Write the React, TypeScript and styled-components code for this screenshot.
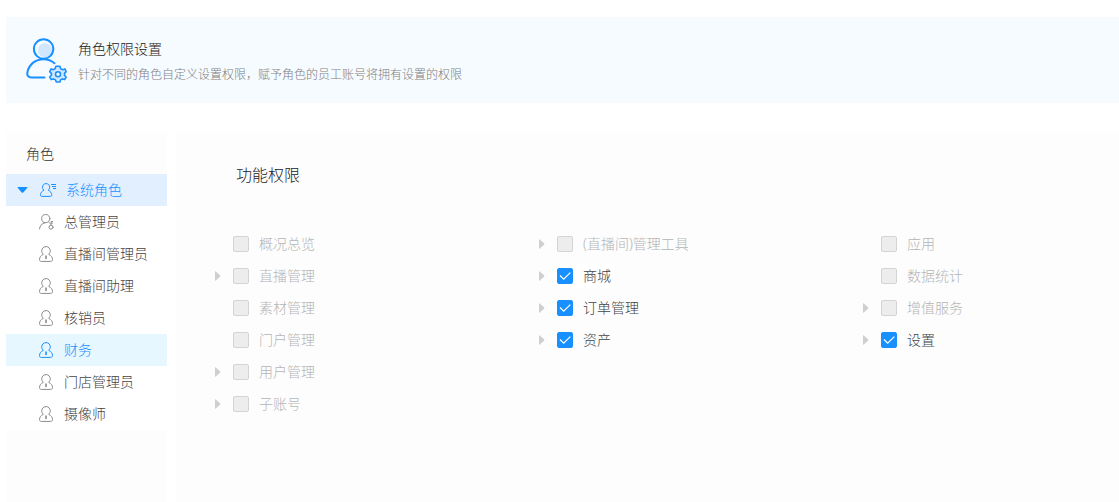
import React, { useState } from "react";
import styled, { createGlobalStyle, css } from "styled-components";

const GlobalStyle = createGlobalStyle`
  *, *::before, *::after { box-sizing: border-box; }
  body {
    margin: 0;
    background: #fff;
    color: #333;
    font-family: "Noto Sans", "Noto Sans CJK SC", sans-serif;
    font-size: 14px;
    font-weight: 300;
    line-height: 22px;
  }
  h1, h2, p, ul { margin: 0; padding: 0; font-weight: inherit; }
  ul { list-style: none; }
  button { border: 0; padding: 0; background: none; font: inherit; color: inherit; cursor: pointer; }
`;

const Page = styled.div`
  display: flex;
  flex-direction: column;
  gap: 29px;
  min-height: 100vh;
  padding: 17px 0 0 6px;
`;

const Banner = styled.header`
  display: flex;
  align-items: center;
  gap: 10px;
  height: 86px;
  padding: 0 20px;
  background: #f5fbff;
`;

const BannerText = styled.div`
  display: flex;
  flex-direction: column;
  gap: 4px;
  padding-top: 4px;
`;

const BannerTitle = styled.h1`
  font-size: 14px;
  color: #222;
`;

const BannerNote = styled.p`
  font-size: 12px;
  color: #808080;
`;

const Content = styled.div`
  display: flex;
  flex: 1;
  gap: 9px;
`;

const Sidebar = styled.nav`
  flex: 0 0 161px;
  background: #fdfdfd;
`;

const SidebarTitle = styled.h2`
  padding: 2px 20px 0;
  font-size: 14px;
  line-height: 40px;
`;

const RoleRow = styled.button<{ $selected?: boolean }>`
  display: flex;
  align-items: center;
  gap: 9px;
  width: 100%;
  height: 32px;
  padding-left: 33px;
  color: #444;
  background: #fff;
  ${(p) => p.$selected && css`color: #1890ff; background: #e6f7ff;`}
  svg { color: ${(p) => (p.$selected ? "#1890ff" : "#8c8c8c")}; }
`;

const GroupRow = styled(RoleRow)`
  padding-left: 11px;
  color: #1890ff;
  background: #e1efff;
  svg { color: #1890ff; }
  svg + svg { margin-left: 3px; }
`;

const Main = styled.main`
  flex: 1;
  min-width: 0;
  padding: 32px 0 32px 37px;
  background: #fdfdfd;
`;

const MainTitle = styled.h2`
  padding-left: 23px;
  font-size: 16px;
  line-height: 22px;
  color: #222;
`;

const Columns = styled.div`
  display: grid;
  grid-template-columns: 54fr 54fr 43fr;
  margin-top: 42px;
`;

const PermissionRow = styled.li`
  display: flex;
  align-items: center;
  height: 32px;
`;

const Expander = styled.button`
  display: flex;
  align-items: center;
  width: 17px;
  height: 24px;
  color: #cfcfcf;
`;

const Spacer = styled.span`
  width: 17px;
`;

const CheckLabel = styled.label<{ $disabled: boolean; $highlight?: boolean }>`
  display: flex;
  align-items: center;
  gap: 10px;
  padding: 1px 3px;
  color: ${(p) => (p.$disabled ? "#b5b5b5" : "#444")};
  background: ${(p) => (p.$highlight ? "#fff" : "transparent")};
`;

const CheckFrame = styled.span`
  display: grid;
  & > * { grid-area: 1 / 1; }
  svg { pointer-events: none; z-index: 1; }
`;

const Checkbox = styled.input`
  appearance: none;
  width: 16px;
  height: 16px;
  margin: 0;
  border: 1px solid #d4d4d4;
  border-radius: 2px;
  background: #fff;
  &:disabled { background: #ededed; }
  &:checked { border-color: #1890ff; background: #1890ff; }
  & + svg { visibility: hidden; }
  &:checked + svg { visibility: visible; }
`;

const RoleSettingsIcon = () => (
  <svg width="42" height="46" viewBox="0 0 42 46" fill="none" stroke="#1890ff" strokeWidth="2" strokeLinecap="round" aria-hidden="true">
    <circle cx="19" cy="13.2" r="7" fill="#d1e6ff" stroke="none" />
    <circle cx="17.6" cy="12" r="9.7" />
    <path d="M28.5 26.2C25 23.2 21.5 22.2 17.5 22.2C9.5 22.2 3.4 27.2 1.5 34.8C.8 38 1.8 40.4 5 40.4H18.5" />
    <path
      d="M29.9 29.2H33.9L34.6 31.6L36.5 32.7L38.9 31.9L40.1 34.6L38.5 36.4V38.2L40.1 40L38.7 42.6L36.4 41.9L34.6 42.9L33.9 45H30.3L29.4 42.9L27.5 41.9L25.2 42.6L23.7 40L25.4 38.2V36.4L23.7 34.6L25.2 31.9L27.5 32.7L29.2 31.6Z"
      fill="#d1e6ff"
      strokeWidth="1.6"
      strokeLinejoin="round"
    />
    <circle cx="32" cy="37.2" r="2.5" fill="#f5fbff" strokeWidth="1.6" />
  </svg>
);

const CaretDown = () => (
  <svg width="11" height="6" viewBox="0 0 11 6" aria-hidden="true">
    <path d="M1.2 0H9.8Q11 0 10.2 1L6.3 5.4Q5.5 6 4.7 5.4L.8 1Q0 0 1.2 0Z" fill="currentColor" />
  </svg>
);

const CaretRight = () => (
  <svg width="8" height="10" viewBox="0 0 8 10" aria-hidden="true">
    <path d="M2 .6Q2 -.2 2.8 .4L7 4.2Q7.7 5 7 5.8L2.8 9.6Q2 10.2 2 9.4Z" fill="currentColor" />
  </svg>
);

const bodyPath =
  "M4.4 8.3C3.3 7.4 2.7 6.2 2.7 4.9C2.7 2.5 4.5 .6 7 .6S11.3 2.5 11.3 4.9C11.3 6.2 10.7 7.4 9.6 8.3C12.1 9.5 13.5 11.4 13.5 13.6C13.5 14.8 12.9 15.4 11.7 15.4H2.3C1.1 15.4 .5 14.8 .5 13.6C.5 11.4 1.9 9.5 4.4 8.3Z";

const RoleIcon = () => (
  <svg width="16" height="16" viewBox="0 0 16 16" fill="none" stroke="currentColor" aria-hidden="true">
    <path d={bodyPath} />
    <path d="M7 9.5V13" strokeWidth="1.6" />
  </svg>
);

const AdminIcon = () => (
  <svg width="16" height="16" viewBox="0 0 16 16" fill="none" stroke="currentColor" strokeLinecap="round" aria-hidden="true">
    <circle cx="6.8" cy="4.6" r="4.1" />
    <path d="M.5 15C.9 11.5 2.9 9.3 6 8.8M9.6 8L10.6 9" />
    <path d="M12 11V7.6H13.6M12 9.2H13.4" />
    <circle cx="12" cy="13.2" r="2" />
  </svg>
);

const GroupIcon = () => (
  <svg width="17" height="14" viewBox="0 0 17 14" fill="none" stroke="currentColor" aria-hidden="true">
    <path d="M4 7.2C2.9 6.4 2.5 5.4 2.5 4.2C2.5 2.1 4 .6 6.1 .6S9.7 2.1 9.7 4.2C9.7 5.4 9.3 6.4 8.2 7.2C10.5 8.3 11.7 9.9 11.7 11.8C11.7 12.9 11.2 13.4 10.1 13.4H2.1C1 13.4 .5 12.9 .5 11.8C.5 9.9 1.7 8.3 4 7.2Z" />
    <path d="M11 1.5H16M12 3.5H16M13 5.5H16" />
  </svg>
);

const CheckMark = () => (
  <svg width="16" height="16" viewBox="0 0 16 16" fill="none" stroke="#fff" strokeWidth="1.2" aria-hidden="true">
    <path d="M3 7.5L6.7 11.2L13.3 4.6" />
  </svg>
);

const roles = ["总管理员", "直播间管理员", "直播间助理", "核销员", "财务", "门店管理员", "摄像师"];

type Permission = { name: string; expandable?: boolean; granted?: boolean; highlight?: boolean };

const permissions: Permission[][] = [
  [
    { name: "概况总览" },
    { name: "直播管理", expandable: true },
    { name: "素材管理" },
    { name: "门户管理" },
    { name: "用户管理", expandable: true },
    { name: "子账号", expandable: true },
  ],
  [
    { name: "(直播间)管理工具", expandable: true },
    { name: "商城", expandable: true, granted: true, highlight: true },
    { name: "订单管理", expandable: true, granted: true },
    { name: "资产", expandable: true, granted: true },
  ],
  [
    { name: "应用" },
    { name: "数据统计" },
    { name: "增值服务", expandable: true },
    { name: "设置", expandable: true, granted: true },
  ],
];

function PermissionItem({ name, expandable, granted = false, highlight }: Permission) {
  return (
    <PermissionRow>
      {expandable ? (
        <Expander type="button" aria-label={`展开${name}`}>
          <CaretRight />
        </Expander>
      ) : (
        <Spacer />
      )}
      <CheckLabel $disabled={!granted} $highlight={highlight}>
        <CheckFrame>
          <Checkbox type="checkbox" defaultChecked={granted} disabled={!granted} />
          <CheckMark />
        </CheckFrame>
        {name}
      </CheckLabel>
    </PermissionRow>
  );
}

export default function App() {
  const [selected, setSelected] = useState("财务");
  const [open, setOpen] = useState(true);

  return (
    <>
      <GlobalStyle />
      <Page>
        <Banner>
          <RoleSettingsIcon />
          <BannerText>
            <BannerTitle>角色权限设置</BannerTitle>
            <BannerNote>针对不同的角色自定义设置权限，赋予角色的员工账号将拥有设置的权限</BannerNote>
          </BannerText>
        </Banner>
        <Content>
          <Sidebar>
            <SidebarTitle>角色</SidebarTitle>
            <GroupRow type="button" aria-expanded={open} onClick={() => setOpen(!open)}>
              <CaretDown />
              <GroupIcon />
              系统角色
            </GroupRow>
            {open && (
              <ul>
                {roles.map((role) => (
                  <li key={role}>
                    <RoleRow type="button" $selected={role === selected} onClick={() => setSelected(role)}>
                      {role === "总管理员" ? <AdminIcon /> : <RoleIcon />}
                      {role}
                    </RoleRow>
                  </li>
                ))}
              </ul>
            )}
          </Sidebar>
          <Main>
            <MainTitle>功能权限</MainTitle>
            <Columns>
              {permissions.map((column) => (
                <ul key={column[0].name}>
                  {column.map((item) => (
                    <PermissionItem key={item.name} {...item} />
                  ))}
                </ul>
              ))}
            </Columns>
          </Main>
        </Content>
      </Page>
    </>
  );
}
